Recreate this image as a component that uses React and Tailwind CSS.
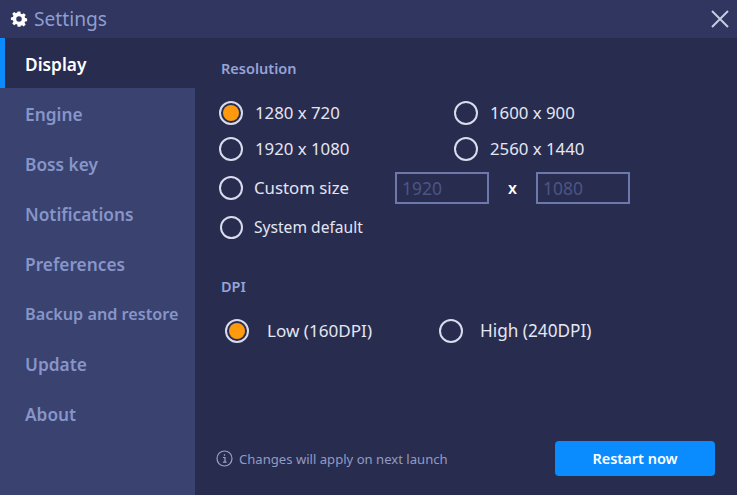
import React from "react";

function Radio({ on, label, gap = "gap-[12px]", size = "w-[24px] h-[24px]", text = "text-[16.8px]", cls = "" }) {
  return (
    <div className={`flex items-center ${gap} ${cls}`}>
      <span className={`${size} rounded-full border-2 border-[#d9dcec] flex items-center justify-center shrink-0`}>
        {on && <span className="w-[16px] h-[16px] rounded-full bg-[#ff9a0e]" />}
      </span>
      <span className={`${text} leading-[24px] text-[#e4e6f2] whitespace-nowrap`}>{label}</span>
    </div>
  );
}

const items = [
  ["Engine", "text-[17.3px]"],
  ["Boss key", "text-[17.3px]"],
  ["Notifications", "text-[17.3px]"],
  ["Preferences", "text-[17.3px]"],
  ["Backup and restore", "text-[16.2px]"],
  ["Update", "text-[17.3px]"],
  ["About", "text-[17.3px]"],
];

export default function App() {
  return (
    <div className="w-[737px] h-[495px] flex flex-col overflow-hidden bg-[#282c4f] font-['Noto_Sans','Open_Sans',sans-serif]">
      <header className="h-[38px] shrink-0 bg-[#30365f] flex items-center justify-between pl-[10px] pr-[7px]">
        <div className="flex items-center gap-[6px]">
          <svg width="18" height="18" viewBox="0 0 24 24" fill="#ffffff">
            <path fillRule="evenodd" d="M10 1h4l.6 3.1c.7.2 1.3.5 1.9.9l2.7-1.7 2.8 2.8L20.3 8.8c.3.6.6 1.2.8 1.9L24 11.3v3.9l-3 .6c-.2.6-.5 1.3-.8 1.8l1.7 2.7-2.8 2.8-2.6-1.8c-.6.4-1.2.6-1.9.8L14 23.5h-4l-.6-3.2c-.7-.2-1.3-.4-1.9-.8l-2.7 1.8L2 18.5l1.8-2.7c-.4-.6-.6-1.2-.8-1.8L0 13.4V9.6l3-.6c.2-.7.5-1.3.8-1.9L2 4.4 4.8 1.6l2.7 1.8c.6-.4 1.2-.7 1.9-.9L10 1zm2 7a4 4 0 100 8.2A4 4 0 0012 8z" transform="translate(1.2 1.2) scale(.9)" />
          </svg>
          <span className="text-[19.2px] leading-[24px] text-[#8f9dcf]">Settings</span>
        </div>
        <svg width="20" height="20" viewBox="0 0 20 20" stroke="#c9cce0" strokeWidth="2" fill="none">
          <path d="M2 2l16 16M18 2L2 18" />
        </svg>
      </header>
      <div className="flex flex-1 min-h-0">
        <nav className="w-[195px] shrink-0 bg-[#3a4270] flex flex-col">
          <div className="h-[50px] bg-[#282c4f] border-l-[5px] border-[#0a8cff] pl-[20px] pt-[3px] flex items-center text-[17.3px] font-semibold text-white">
            Display
          </div>
          {items.map(([t, size]) => (
            <div key={t} className={`h-[50px] pl-[25px] pt-[3px] flex items-center ${size} font-semibold text-[#8795c8] whitespace-nowrap`}>
              {t}
            </div>
          ))}
        </nav>
        <main className="flex-1 flex flex-col pl-[24px] pr-[22px]">
          <h2 className="mt-[20px] ml-[2px] text-[14.5px] leading-[20px] font-semibold text-[#95a3d6]">Resolution</h2>
          <div className="mt-[23px] grid grid-cols-[235px_1fr] gap-y-[12px]">
            <Radio on label="1280 x 720" />
            <Radio label="1600 x 900" />
            <Radio label="1920 x 1080" />
            <Radio label="2560 x 1440" />
          </div>
          <div className="mt-[11px] flex items-center">
            <Radio label="Custom size" gap="gap-[11px]" cls="w-[176px]" />
            <div className="w-[94px] h-[32px] border-2 border-[#6d79ad] pl-[5px] flex items-center text-[17.5px] text-[#4b5585]">1920</div>
            <span className="w-[47px] text-center text-[16px] font-semibold text-white">x</span>
            <div className="w-[94px] h-[32px] border-2 border-[#6d79ad] pl-[5px] flex items-center text-[17.5px] text-[#4b5585]">1080</div>
          </div>
          <div className="mt-[11px] pl-[1px]">
            <Radio label="System default" gap="gap-[11px]" size="w-[23px] h-[23px]" text="text-[15.6px]" />
          </div>
          <h2 className="mt-[37px] ml-[2px] text-[14.5px] leading-[20px] font-semibold text-[#95a3d6]">DPI</h2>
          <div className="mt-[23px] flex items-center pl-[6px]">
            <Radio on label="Low (160DPI)" gap="gap-[18px]" cls="w-[214px]" text="text-[17.1px]" />
            <Radio label="High (240DPI)" gap="gap-[17px]" text="text-[17.2px]" />
          </div>
          <div className="flex-1" />
          <footer className="flex items-center justify-between mb-[19px]">
            <div className="flex items-center gap-[6px] -ml-[3px]">
              <svg width="17" height="17" viewBox="0 0 17 17" fill="none" stroke="#9aa3c9" strokeWidth="1.2">
                <circle cx="8.5" cy="8.5" r="7.5" />
                <path d="M7 7.5h2v4.5M7 12.2h3.6M8.5 4.3v1.4" />
              </svg>
              <span className="text-[13.1px] leading-[18px] text-[#939bc3]">Changes will apply on next launch</span>
            </div>
            <button className="w-[160px] h-[35px] rounded-[4px] bg-[#0a8cff] text-white text-[14.5px] font-semibold">Restart now</button>
          </footer>
        </main>
      </div>
    </div>
  );
}
